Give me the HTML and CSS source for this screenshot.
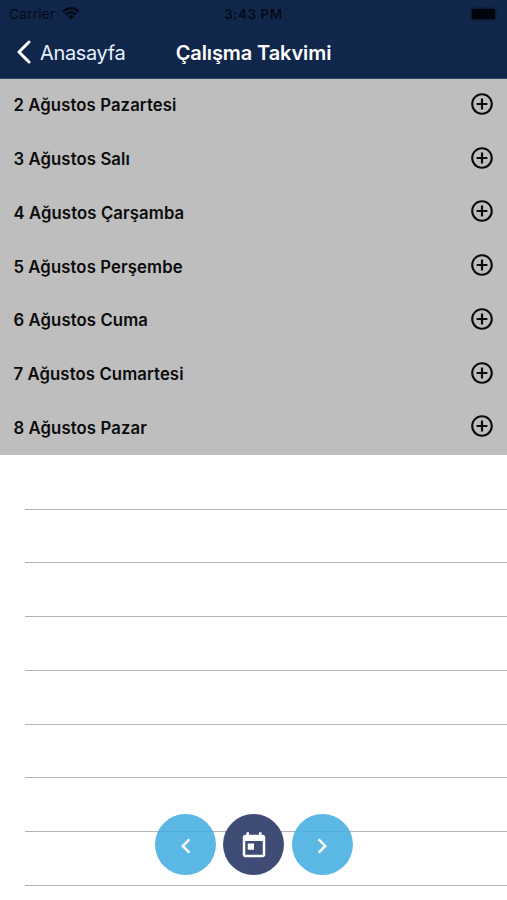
FILE: index.html
```html
<!DOCTYPE html>
<html lang="tr">
<head>
<meta charset="utf-8">
<title>Çalışma Takvimi</title>
<link rel="stylesheet" href="styles.css">
</head>
<body>
<svg class="symbols" aria-hidden="true">
  <symbol id="plus" viewBox="0 0 24 24"><path d="M13 7h-2v4H7v2h4v4h2v-4h4v-2h-4V7zm-1-5C6.480 2 2 6.480 2 12s4.480 10 10 10 10-4.480 10-10S17.520 2 12 2zm0 18c-4.410 0-8-3.590-8-8s3.590-8 8-8 8 3.590 8 8-3.590 8-8 8z"/></symbol>
</svg>
<header class="header">
  <div class="status">
    <div class="carrier"><span>Carrier</span>
      <svg class="wifi" viewBox="0 0 18 13"><path d="M1 4.700Q9-2.300 17 4.700M3.900 7.600Q9 3.100 14.100 7.600" fill="none" stroke="currentColor" stroke-width="2.500"/><path d="M5.900 9.300Q9 6.700 12.100 9.300L9 12.700z"/></svg>
    </div>
    <span class="time">3:43 PM</span>
    <span class="battery"></span>
  </div>
  <nav class="nav">
    <a class="back"><svg class="back-icon" viewBox="0 0 15 24"><path d="M13 2L3 12l10 10" fill="none" stroke="currentColor" stroke-width="3" stroke-linecap="round" stroke-linejoin="round"/></svg><span>Anasayfa</span></a>
    <h1 class="title">Çalışma Takvimi</h1>
  </nav>
</header>
<main>
  <ul class="days">
    <li class="day"><span>2 Ağustos Pazartesi</span><svg class="add"><use href="#plus"/></svg></li>
    <li class="day"><span>3 Ağustos Salı</span><svg class="add"><use href="#plus"/></svg></li>
    <li class="day"><span>4 Ağustos Çarşamba</span><svg class="add"><use href="#plus"/></svg></li>
    <li class="day"><span>5 Ağustos Perşembe</span><svg class="add"><use href="#plus"/></svg></li>
    <li class="day"><span>6 Ağustos Cuma</span><svg class="add"><use href="#plus"/></svg></li>
    <li class="day"><span>7 Ağustos Cumartesi</span><svg class="add"><use href="#plus"/></svg></li>
    <li class="day"><span>8 Ağustos Pazar</span><svg class="add"><use href="#plus"/></svg></li>
  </ul>
  <div class="empty"><div></div><div></div><div></div><div></div><div></div><div></div><div></div><div></div></div>
</main>
<div class="controls">
  <button class="round" aria-label="Önceki"><svg viewBox="0 0 24 24"><path d="M15.410 7.410L14 6l-6 6 6 6 1.410-1.410L10.830 12z"/></svg></button>
  <button class="round today" aria-label="Bugün"><svg viewBox="0 0 24 24"><path d="M19 3h-1V1h-2v2H8V1H6v2H5c-1.110 0-1.990.9-1.990 2L3 19c0 1.100.890 2 2 2h14c1.100 0 2-.9 2-2V5c0-1.100-.9-2-2-2zm0 16H5V8h14v11zM7 10h5v5H7z"/></svg></button>
  <button class="round" aria-label="Sonraki"><svg viewBox="0 0 24 24"><path d="M10 6L8.590 7.410 13.170 12l-4.580 4.590L10 18l6-6z"/></svg></button>
</div>
</body>
</html>
```
FILE: styles.css
```css
* { box-sizing: border-box; }
body { margin: 0; height: 900px; overflow: hidden; position: relative; background: #fff; color: #0b0b0c; font-family: Inter, "Liberation Sans", sans-serif; white-space: nowrap; }
svg { display: block; fill: currentColor; }
.symbols { position: absolute; width: 0; height: 0; }
.header { height: 79px; background: #11264b; border-bottom: 1px solid #294764; }
.status { height: 27px; display: grid; grid-template-columns: 1fr auto 1fr; align-items: center; padding: 0 9px; color: #050b17; font-size: 13.5px; }
.carrier { display: flex; align-items: center; gap: 7px; letter-spacing: .3px; }
.wifi { width: 18px; height: 13px; }
.time { font-weight: 600; letter-spacing: .5px; }
.battery { justify-self: end; width: 23px; height: 10px; margin-right: 3px; border-radius: 2px; background: #01040a; box-shadow: 0 0 0 1.500px #0b1b36; }
.nav { height: 51px; display: grid; grid-template-columns: 1fr auto 1fr; align-items: center; color: #fff; }
.back { display: flex; align-items: center; gap: 9px; padding-left: 16px; font-size: 20px; letter-spacing: -.35px; color: #e5f1ff; }
.back-icon { width: 15px; height: 24px; margin-top: -2px; color: #fff; }
.title { margin: 0; font-size: 20px; font-weight: 600; letter-spacing: -.1px; }
.days { margin: 0; padding: 0 13px; list-style: none; background: #bebebe; }
.day { height: 53.780px; display: flex; align-items: center; justify-content: space-between; font-size: 16.700px; font-weight: 600; letter-spacing: .12px; }
.day span { padding-left: .4px; padding-bottom: 1px; }
.add { width: 26px; height: 26px; margin-right: -1px; margin-top: -4px; }
.empty { padding-left: 25px; }
.empty div { height: 53.750px; border-bottom: 1px solid #b3b4b6; }
.empty div:first-child { height: 54.150px; }
.controls { position: absolute; left: 155px; top: 814px; display: flex; gap: 7.400px; }
.round { width: 61px; height: 61px; padding: 0; border: 0; border-radius: 50%; background: rgba(67, 172, 224, .87); color: #fff; display: grid; place-items: center; }
.round svg { width: 30px; height: 30px; margin-top: 2px; }
.today { background: #3f4c76; }
```
